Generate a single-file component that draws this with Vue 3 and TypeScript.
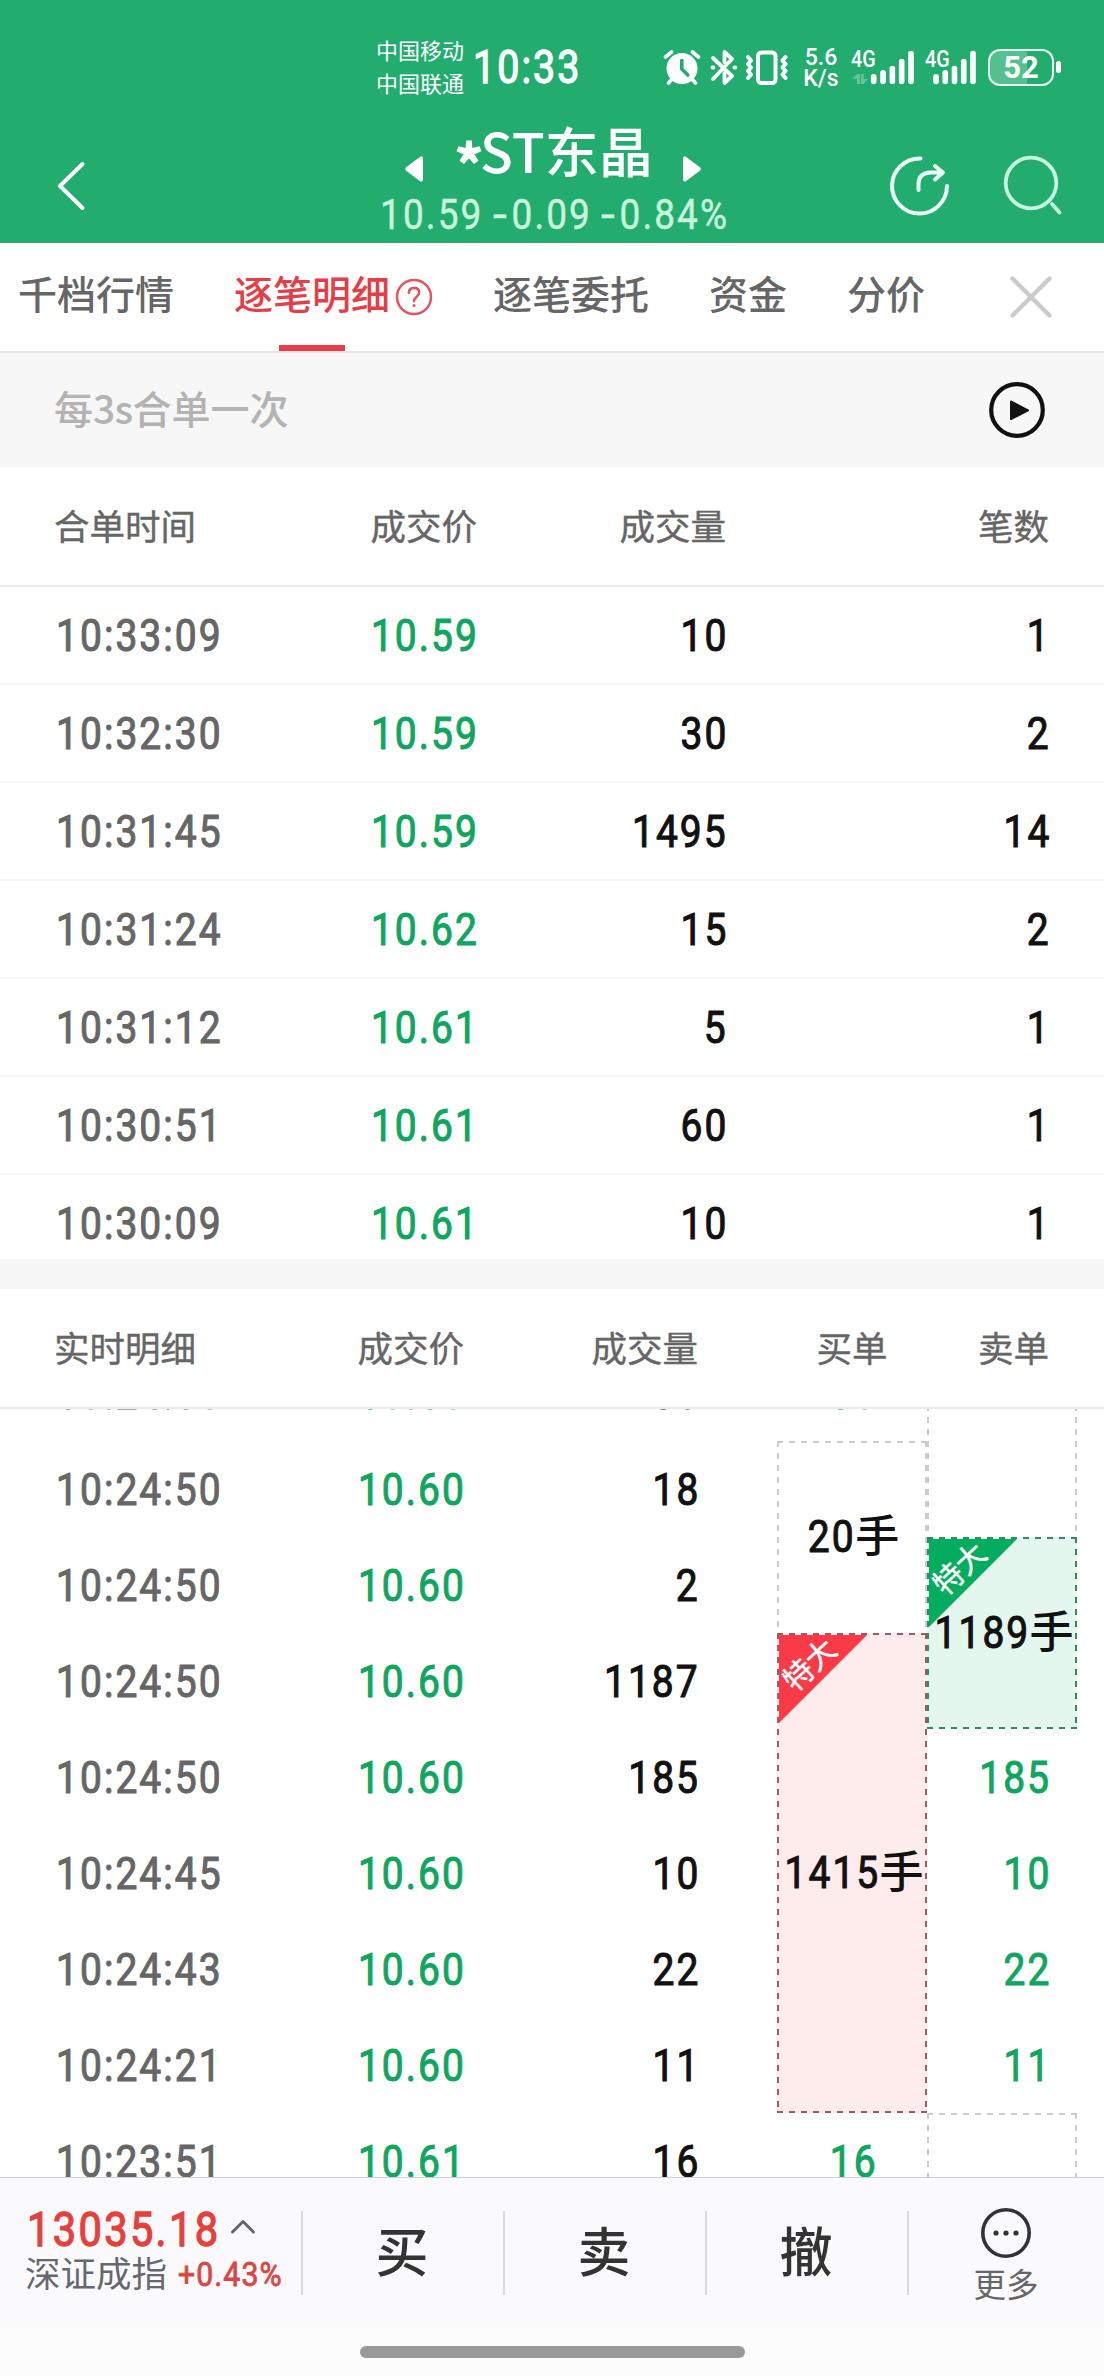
<script setup lang="ts">
interface Merged { time: string; price: string; volume: string; count: string }
interface Tick { time: string; price: string; volume: string; buy?: string; sell?: string }
interface OrderBox { side: 'buy' | 'sell'; row: number; span: number; tone: 'plain' | 'red' | 'green'; lots?: string }

const merged: Merged[] = [
  { time: '10:33:09', price: '10.59', volume: '10', count: '1' },
  { time: '10:32:30', price: '10.59', volume: '30', count: '2' },
  { time: '10:31:45', price: '10.59', volume: '1495', count: '14' },
  { time: '10:31:24', price: '10.62', volume: '15', count: '2' },
  { time: '10:31:12', price: '10.61', volume: '5', count: '1' },
  { time: '10:30:51', price: '10.61', volume: '60', count: '1' },
  { time: '10:30:09', price: '10.61', volume: '10', count: '1' },
]

const ticks: Tick[] = [
  { time: '10:24:50', price: '10.60', volume: '30', buy: '30' },
  { time: '10:24:50', price: '10.60', volume: '18' },
  { time: '10:24:50', price: '10.60', volume: '2' },
  { time: '10:24:50', price: '10.60', volume: '1187' },
  { time: '10:24:50', price: '10.60', volume: '185', sell: '185' },
  { time: '10:24:45', price: '10.60', volume: '10', sell: '10' },
  { time: '10:24:43', price: '10.60', volume: '22', sell: '22' },
  { time: '10:24:21', price: '10.60', volume: '11', sell: '11' },
  { time: '10:23:51', price: '10.61', volume: '16', buy: '16' },
]

const boxes: OrderBox[] = [
  { side: 'sell', row: 1, span: 2, tone: 'plain' },
  { side: 'buy', row: 2, span: 2, tone: 'plain', lots: '20' },
  { side: 'sell', row: 3, span: 2, tone: 'green', lots: '1189' },
  { side: 'buy', row: 4, span: 5, tone: 'red', lots: '1415' },
  { side: 'sell', row: 9, span: 2, tone: 'plain' },
]

const barTops = [74, 70, 65.7, 58.7, 50.7]
const actions = ['买', '卖', '撤']
</script>

<template>
  <div class="app">
    <header class="top">
      <div class="status">
        <div class="carriers"><span>中国移动</span><span>中国联通</span></div>
        <span class="clock num left">10:33</span>
        <svg class="alarm" width="38" height="38" viewBox="662 49 38 38" fill="none" stroke="#fff" stroke-linecap="round">
          <circle cx="681" cy="68.5" r="15.5" fill="#fff" stroke="none" />
          <path d="M664.5 57l6-5M697.5 57l-6-5M672 78l-4.500 5M690 78l4.500 5" stroke-width="3.600" />
          <path d="M680.800 60.500v8.500l6 6" stroke="#22ac6e" stroke-width="3.600" stroke-linejoin="round" />
        </svg>
        <svg class="bt" width="28" height="38" viewBox="709 49 28 38" fill="none" stroke="#fff" stroke-width="3.800" stroke-linecap="round" stroke-linejoin="round">
          <path d="M712 58l19 18-7.500 7V73M712 79l19-20-7.500-7v10" />
          <path d="M711.500 67.500h.8M733.500 67.500h.8" stroke-width="4" />
        </svg>
        <svg class="vib" width="44" height="38" viewBox="744 49 44 38" fill="none" stroke="#fff" stroke-linecap="round" stroke-linejoin="round">
          <rect x="757" y="52.500" width="17.500" height="30.500" rx="3.500" stroke-width="4" />
          <path d="M747 57l3 3.500-3 3.500 3 3.500-3 3.500 3 3.500-3 3.500M784.500 57l-3 3.500 3 3.500-3 3.500 3 3.500-3 3.500 3 3.500" stroke-width="4" />
        </svg>
        <div class="speed"><span>5.6</span><span>K/s</span></div>
        <div class="net">
          <span class="gen">4G</span>
          <svg width="64" height="38" viewBox="850 49 64 38" fill="#fff">
            <g fill="#fff" opacity=".3"><path d="M851 79l5-5h3v10h-3v-5zM860 74h2.800v5h4.200l-4.500 5H860z" /></g>
            <rect v-for="(t, i) in barTops" :key="i" :x="869.900 + i * 9.330" :y="t" width="5.600" :height="84.300 - t" rx="2.800" />
          </svg>
        </div>
        <div class="net second">
          <span class="gen">4G</span>
          <svg width="52" height="38" viewBox="924 49 52 38" fill="#fff">
            <rect v-for="(t, i) in barTops" :key="i" :x="932.200 + i * 9.250" :y="t" width="5.600" :height="84.300 - t" rx="2.800" />
          </svg>
        </div>
        <div class="battery"><span>52</span></div>
        <i class="nub"></i>
      </div>

      <div class="titlebar">
        <svg class="back" width="34" height="54" viewBox="54 159 34 54" fill="none" stroke="#fff" stroke-width="4" stroke-linecap="round" stroke-linejoin="round">
          <path d="M82.500 164L60 186l22.500 22" />
        </svg>
        <div class="stock">
          <div class="name">
            <svg width="18" height="26" viewBox="0 0 18 26" fill="#fff"><path d="M15.500.4Q18 0 18 2.500v21q0 2.500-2.500 2.100L.8 14.500q-1.300-1.500 0-3z" /></svg>
            <h1><span class="star">*</span>ST东晶</h1>
            <svg width="18" height="26" viewBox="0 0 18 26" fill="#fff"><path d="M2.500.4Q0 0 0 2.500v21q0 2.500 2.500 2.100l14.700-11.100q1.300-1.500 0-3z" /></svg>
          </div>
          <div class="quote"><span>10.59</span><span><b>-</b>0.09</span><span><b>-</b>0.84%</span></div>
        </div>
        <svg class="share" width="62" height="62" viewBox="887 155 62 62" fill="none" stroke="#e9fff5" stroke-width="4" stroke-linecap="round" stroke-linejoin="round">
          <path d="M918.500 158.500A27.500 27.500 0 1 0 945 186" />
          <path d="M916.500 190v-6q0-11 12-11.500h12M933 166l8 6.500-8 7" />
        </svg>
        <svg class="search" width="62" height="62" viewBox="1000 154 62 62" fill="none" stroke="#c6f5df" stroke-width="3.800" stroke-linecap="round">
          <circle cx="1029" cy="183" r="25.300" /><path d="M1050 204l7.500 8.500" />
        </svg>
      </div>
    </header>

    <nav class="tabs">
      <span>千档行情</span>
      <span class="active">逐笔明细<svg width="38" height="38" viewBox="0 0 38 38" fill="none" stroke="#e6535a" stroke-width="2.500" stroke-linecap="round"><circle cx="19" cy="19" r="17" /><path d="M13.800 14.800q.3-4.800 5.200-4.800t5.200 4.300q0 2.500-2.700 4.600t-2.500 4.300" /><circle cx="19" cy="27.500" r="1.500" fill="#e6535a" stroke="none" /></svg></span>
      <span>逐笔委托</span>
      <span>资金</span>
      <span>分价</span>
      <svg class="close" width="42" height="42" viewBox="0 0 42 42" stroke="#cbcbcb" stroke-width="4.400" stroke-linecap="round"><path d="M2.500 2.500l37 37M39.500 2.500l-37 37" /></svg>
    </nav>

    <div class="hint">
      <span>每<em>3s</em>合单一次</span>
      <svg width="58" height="58" viewBox="0 0 58 58"><circle cx="29" cy="29" r="25.800" fill="none" stroke="#111" stroke-width="4.200" /><path d="M23 20.500l17 8.800-17 8.800z" fill="#111" stroke="#111" stroke-width="2" stroke-linejoin="round" /></svg>
    </div>

    <section class="merged">
      <div class="head cols"><span>合单时间</span><span>成交价</span><span>成交量</span><span>笔数</span></div>
      <div class="list">
        <div v-for="m in merged" :key="m.time" class="row cols">
          <span class="time"><span class="num left">{{ m.time }}</span></span>
          <span class="green"><span class="num right">{{ m.price }}</span></span>
          <span><span class="num right">{{ m.volume }}</span></span>
          <span><span class="num right">{{ m.count }}</span></span>
        </div>
      </div>
    </section>

    <section class="ticks">
      <div class="head tickcols">
        <span class="c-time">实时明细</span><span class="c-price">成交价</span><span class="c-vol">成交量</span><span class="c-buy">买单</span><span class="c-sell">卖单</span>
      </div>
      <div class="viewport">
        <div class="grid tickcols">
          <div v-for="(b, i) in boxes" :key="'b' + i" class="box" :class="[b.side, b.tone]" :style="{ gridRow: `${b.row} / span ${b.span}` }">
            <div v-if="b.tone !== 'plain'" class="corner"><span>特大</span></div>
            <div v-if="b.lots" class="lots" :class="{ short: b.lots.length < 3 }"><span class="num">{{ b.lots }}</span><span class="unit">手</span></div>
          </div>
          <template v-for="(t, i) in ticks" :key="i">
            <span class="c-time time" :style="{ gridRow: i + 1 }"><span class="num left">{{ t.time }}</span></span>
            <span class="c-price green" :style="{ gridRow: i + 1 }"><span class="num right">{{ t.price }}</span></span>
            <span class="c-vol" :style="{ gridRow: i + 1 }"><span class="num right">{{ t.volume }}</span></span>
            <span v-if="t.buy" class="c-buy green" :style="{ gridRow: i + 1 }"><span class="num">{{ t.buy }}</span></span>
            <span v-if="t.sell" class="c-sell green" :style="{ gridRow: i + 1 }"><span class="num right">{{ t.sell }}</span></span>
          </template>
        </div>
      </div>
    </section>

    <footer class="bottom">
      <div class="index">
        <div class="value"><span class="num left">13035.18</span><svg width="26" height="18" viewBox="0 0 26 18" fill="none" stroke="#666" stroke-width="3" stroke-linecap="round" stroke-linejoin="round"><path d="M2.500 15L13 4.500 23.500 15" /></svg></div>
        <div class="desc"><span>深证成指</span><span class="num left">+0.43%</span></div>
      </div>
      <div v-for="a in actions" :key="a" class="action">{{ a }}</div>
      <div class="more">
        <svg width="50" height="50" viewBox="0 0 50 50"><circle cx="25" cy="25" r="23.200" fill="none" stroke="#333" stroke-width="3.600" /><circle v-for="x in [15, 25, 35]" :key="x" :cx="x" cy="25" r="2.600" fill="#333" /></svg>
        <span>更多</span>
      </div>
    </footer>
    <div class="home"><i></i></div>
  </div>
</template>

<style>
body { margin: 0; background: #fff; }
</style>

<style scoped>
.app { width: 1104px; height: 2376px; overflow: hidden; display: flex; flex-direction: column; background: #fff; font-family: "Noto Sans CJK SC", sans-serif; color: #111; }
.app svg { display: block; flex: none; }
.num { display: inline-block; font-family: Roboto, "Noto Sans CJK SC", sans-serif; font-weight: 400; -webkit-text-stroke: 1.100px currentColor; font-size: 45px; line-height: 62px; letter-spacing: 2.400px; transform: scaleX(.865); white-space: nowrap; }
.num.left { transform-origin: left; }
.num.right { transform-origin: right; margin-right: -2px; }
.green { color: #0fa660; }
.time { color: #666; }

.top { height: 243px; flex: none; background: #22ac6e; color: #fff; }
.status { height: 116px; display: flex; align-items: flex-start; }
.carriers { margin: 33px 0 0 376px; width: 97px; display: flex; flex-direction: column; font-size: 22px; line-height: 33px; }
.clock { margin-top: 37px; width: 110px; height: 60px; font-size: 45.500px; -webkit-text-stroke-width: 1.300px; }
.alarm { margin: 49px 0 0 80px; }
.bt { margin: 49px 0 0 9px; }
.vib { margin: 49px 0 0 7px; }
.speed { margin: 47px 0 0 13px; width: 38px; display: flex; flex-direction: column; align-items: center; font: 500 23px/21px Roboto, sans-serif; }
.net { margin: 49px 0 0 11px; position: relative; }
.net.second { margin-left: 10px; }
.gen { position: absolute; left: 0; top: 0; font: 500 23px/22px Roboto, sans-serif; transform: scaleX(.86); transform-origin: left; }
.battery { box-sizing: border-box; width: 66px; height: 37px; margin: 49px 0 0 11px; border: 2.700px solid #e9fff4; border-radius: 12px; display: flex; align-items: center; justify-content: center; font: 700 31px/32px Roboto, sans-serif; background: linear-gradient(90deg, #56bf8f 60%, transparent 60%); }
.nub { width: 5px; height: 12px; margin: 61px 0 0 2px; border-radius: 2.500px; background: #fff; }

.titlebar { display: flex; align-items: flex-start; height: 127px; }
.back { margin: 43px 0 0 54px; }
.stock { margin-left: 291px; width: 348px; height: 127px; display: flex; flex-direction: column; align-items: center; }
.name { display: flex; align-items: flex-start; gap: 32px; }
.name svg { margin-top: 40px; }
.name h1 { margin: 0; width: 196px; font-size: 54px; line-height: 67px; font-weight: 500; white-space: nowrap; }
.star { position: relative; top: 18px; left: -1px; font-size: 62px; line-height: 0; margin-right: -5px; -webkit-text-stroke: 1.500px currentColor; }
.quote { margin-top: 7px; display: grid; grid-template-columns: 113px 108px 125px; font: 400 42px/49px Roboto, sans-serif; letter-spacing: 2.400px; -webkit-text-stroke: .5px currentColor; color: #c9f2dd; white-space: nowrap; }
.quote span { transform: scaleX(.88); transform-origin: left; }
.quote b { display: inline-block; font-weight: 400; transform: scaleX(1.350); transform-origin: left; margin-right: 7px; }
.share { margin: 39px 0 0 162px; }
.search { margin: 38px 0 0 51px; }

.tabs { height: 108px; flex: none; display: flex; gap: 60px; padding-left: 18px; border-bottom: 2px solid #e6e6e6; font-size: 39px; line-height: 98px; font-weight: 500; color: #666; }
.active { position: relative; display: flex; color: #e63e47; }
.active svg { margin: 35px 0 0 5px; }
.active::after { content: ""; position: absolute; left: 45px; bottom: 0; width: 66px; height: 6px; background: #e63e47; }
.close { margin: 33px 0 0 25px; }
.tabs span { white-space: nowrap; }

.hint { height: 114px; flex: none; background: #f7f7f7; display: flex; align-items: center; justify-content: space-between; padding: 0 58px 0 54px; font-size: 39px; line-height: 56px; font-weight: 500; color: #b3b3b3; }
.hint span { margin-bottom: 6px; }
.hint em { font-style: normal; letter-spacing: -.8px; }

.head { height: 118px; font-size: 35.500px; line-height: 115px; font-weight: 400; -webkit-text-stroke: .4px currentColor; color: #666; border-bottom: 2px solid #ebebeb; }
.cols { display: grid; grid-template-columns: 214px 209px 249px 323px; padding-left: 54px; }
.cols > span { text-align: right; }
.cols > span:first-child { text-align: left; }
.merged { flex: none; height: 792px; overflow: hidden; border-bottom: 30px solid #f7f7f7; }
.row { height: 96px; align-items: center; border-bottom: 2px solid #f6f6f6; }
.row > span, .grid > span { height: 60px; line-height: 60px; font-size: 0; }
.time .num { margin-left: 2px; }

.ticks { flex: none; }
.tickcols { display: grid; grid-template-columns: 54px 214px 196px 234px 79px 150px 122px 28px; text-align: right; }
.c-time { grid-column: 2; text-align: left; }
.c-price { grid-column: 3; }
.c-vol { grid-column: 4; }
.c-buy { grid-column: 6; text-align: center; }
.c-sell { grid-column: 7; }
.viewport { height: 768px; overflow: hidden; }
.grid { margin-top: -64px; grid-auto-rows: 96px; align-items: center; }
.grid > .c-buy { padding-left: 3px; }
.box { --line: #ccc; --fill: transparent; position: relative; align-self: stretch; display: flex; align-items: center; justify-content: center;
  background:
    repeating-linear-gradient(90deg, var(--line) 0 6px, transparent 6px 12px) 0 0 / 100% 2px no-repeat,
    repeating-linear-gradient(90deg, var(--line) 0 6px, transparent 6px 12px) 0 100% / 100% 2px no-repeat,
    repeating-linear-gradient(180deg, var(--line) 0 6px, transparent 6px 12px) 0 0 / 2px 100% no-repeat,
    repeating-linear-gradient(180deg, var(--line) 0 6px, transparent 6px 12px) 100% 0 / 2px 100% no-repeat,
    var(--fill); }
.box.plain { background-position: 0 0, 0 200%, 0 0, 100% 0; }
.buy { grid-column: 6; }
.sell { grid-column: 7 / 9; }
.red { --line: #a9555a; --fill: #feebeb; }
.box.green { --line: #2e8b62; --fill: #e4f7ee; color: #111; }
.corner { position: absolute; left: 2px; top: 2px; width: 88px; height: 88px; background: #fa3a46; clip-path: polygon(0 0, 100% 0, 0 100%); color: #fff; }
.box.green .corner { background: #04ad5e; }
.corner span { position: absolute; left: -1px; top: 9px; width: 60px; font-size: 30px; line-height: 38px; font-weight: 400; -webkit-text-stroke: .4px currentColor; transform: rotate(-43deg); white-space: nowrap; }
.lots { display: flex; align-items: center; height: 60px; z-index: 1; }
.lots .num { margin: 0 -8px 0 -4px; }
.lots.short .num { margin: 0 -4px 0 -1px; }
.unit { font-size: 44px; line-height: 60px; font-weight: 500; margin-top: -8px; }

.bottom { box-sizing: border-box; height: 151px; flex: none; border-top: 1px solid #d0d0d2; background: #fafafc; display: flex; }
.index { width: 301px; flex: none; padding-top: 24px; box-sizing: border-box; }
.value { display: flex; height: 56px; padding-left: 27px; color: #e5403b; }
.value .num { width: 201px; font-size: 47.500px; line-height: 57px; letter-spacing: 2.700px; transform: scaleX(.875); -webkit-text-stroke-width: 1.300px; }
.value svg { margin: 15px 0 0 2px; }
.desc { display: flex; align-items: center; height: 36px; padding-left: 25px; margin-top: -4px; font-size: 35.500px; line-height: 36px; color: #666870; }
.desc .num { margin: 6px 0 0 11px; font-size: 33px; line-height: 36px; letter-spacing: 1.200px; transform: scaleX(.915); -webkit-text-stroke-width: .8px; color: #db4643; }
.action, .more { position: relative; flex: none; width: 202px; height: 150px; text-align: center; }
.action { font-size: 53px; line-height: 143px; font-weight: 500; color: #333; }
.action::before, .more::before { content: ""; position: absolute; left: 0; top: 33px; width: 2px; height: 84px; background: #dadadc; }
.more { width: 198px; display: flex; flex-direction: column; align-items: center; padding-top: 30px; box-sizing: border-box; font-size: 32.500px; line-height: 49px; color: #666; }
.home { height: 48px; flex: none; background: #fcfcfc; display: flex; justify-content: center; }
.home i { width: 385px; height: 12px; margin-top: 18px; border-radius: 6px; background: #999; }
</style>
